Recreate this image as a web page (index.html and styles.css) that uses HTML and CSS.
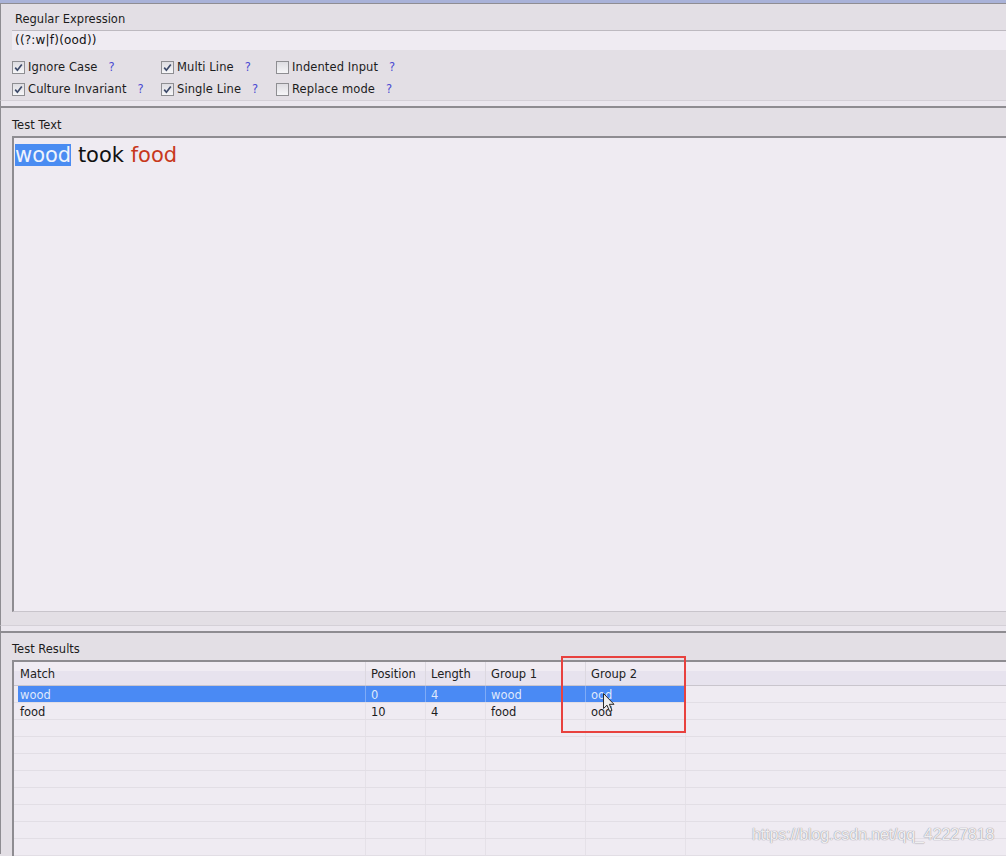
FILE: index.html
```html
<!DOCTYPE html>
<html>
<head>
<meta charset="utf-8">
<link rel="stylesheet" href="styles.css">
</head>
<body>
<div class="topbar"></div>
<section class="panel panel-regex">
  <div class="label label-regex">Regular Expression</div>
  <div class="regex-input">((?:w|f)(ood))</div>
  <div class="options">
    <div class="opt"><span class="cb on"><svg viewBox="0 0 11 11" width="11" height="11"><path d="M2.2 5.6 L4.4 8.2 L8.8 2.4" fill="none" stroke="#3d4a6a" stroke-width="1.7"/></svg></span><span class="txt">Ignore Case</span><span class="q">?</span></div>
    <div class="opt"><span class="cb on"><svg viewBox="0 0 11 11" width="11" height="11"><path d="M2.2 5.6 L4.4 8.2 L8.8 2.4" fill="none" stroke="#3d4a6a" stroke-width="1.7"/></svg></span><span class="txt">Multi Line</span><span class="q">?</span></div>
    <div class="opt"><span class="cb"></span><span class="txt">Indented Input</span><span class="q">?</span></div>
    <div class="opt"><span class="cb on"><svg viewBox="0 0 11 11" width="11" height="11"><path d="M2.2 5.6 L4.4 8.2 L8.8 2.4" fill="none" stroke="#3d4a6a" stroke-width="1.7"/></svg></span><span class="txt">Culture Invariant</span><span class="q">?</span></div>
    <div class="opt"><span class="cb on"><svg viewBox="0 0 11 11" width="11" height="11"><path d="M2.2 5.6 L4.4 8.2 L8.8 2.4" fill="none" stroke="#3d4a6a" stroke-width="1.7"/></svg></span><span class="txt">Single Line</span><span class="q">?</span></div>
    <div class="opt"><span class="cb"></span><span class="txt">Replace mode</span><span class="q">?</span></div>
  </div>
</section>
<div class="splitter"></div>
<section class="panel panel-test">
  <div class="label">Test Text</div>
  <div class="textbox"><span class="hl">wood</span> took <span class="red">food</span></div>
  <div class="gap"></div>
</section>
<div class="splitter"></div>
<section class="panel panel-results">
  <div class="label label-results">Test Results</div>
  <div class="grid">
    <div class="row head">
      <div class="sp"></div><div class="c c1">Match</div><div class="c">Position</div><div class="c">Length</div><div class="c">Group 1</div><div class="c">Group 2</div><div class="c rest"></div>
    </div>
    <div class="row sel">
      <div class="sp"></div><div class="c c1">wood</div><div class="c">0</div><div class="c">4</div><div class="c">wood</div><div class="c">ood</div><div class="c rest"></div>
    </div>
    <div class="row">
      <div class="sp"></div><div class="c c1">food</div><div class="c">10</div><div class="c">4</div><div class="c">food</div><div class="c">ood</div><div class="c rest"></div>
    </div>
    <div class="row"><div class="sp"></div><div class="c c1"></div><div class="c"></div><div class="c"></div><div class="c"></div><div class="c"></div><div class="c rest"></div></div>
    <div class="row"><div class="sp"></div><div class="c c1"></div><div class="c"></div><div class="c"></div><div class="c"></div><div class="c"></div><div class="c rest"></div></div>
    <div class="row"><div class="sp"></div><div class="c c1"></div><div class="c"></div><div class="c"></div><div class="c"></div><div class="c"></div><div class="c rest"></div></div>
    <div class="row"><div class="sp"></div><div class="c c1"></div><div class="c"></div><div class="c"></div><div class="c"></div><div class="c"></div><div class="c rest"></div></div>
    <div class="row"><div class="sp"></div><div class="c c1"></div><div class="c"></div><div class="c"></div><div class="c"></div><div class="c"></div><div class="c rest"></div></div>
    <div class="row"><div class="sp"></div><div class="c c1"></div><div class="c"></div><div class="c"></div><div class="c"></div><div class="c"></div><div class="c rest"></div></div>
    <div class="row"><div class="sp"></div><div class="c c1"></div><div class="c"></div><div class="c"></div><div class="c"></div><div class="c"></div><div class="c rest"></div></div>
    <div class="row"><div class="sp"></div><div class="c c1"></div><div class="c"></div><div class="c"></div><div class="c"></div><div class="c"></div><div class="c rest"></div></div>
  </div>
</section>
<div class="annot"></div>
<svg class="cursor" width="13" height="20" viewBox="0 0 13 20"><path d="M0.5 0.5 L0.5 15.5 L4 12.2 L6.6 18.4 L9 17.4 L6.4 11.3 L11 11.3 Z" fill="#eeeeee" stroke="#2a2a2a" stroke-width="1"/></svg>
<div class="watermark">https://blog.csdn.net/qq_42227818</div>
</body>
</html>
```
FILE: styles.css
```css
* { box-sizing: border-box; }
html, body { margin: 0; padding: 0; }
body {
  width: 1006px;
  height: 856px;
  overflow: hidden;
  position: relative;
  background: #e3dfe5;
  font-family: "DejaVu Sans", Verdana, sans-serif;
  font-size: 11.5px;
  color: #1c1c1c;
}
.topbar {
  height: 4px;
  border-top: 3px solid #a9b2d8;
  border-bottom: 1px solid #8f8d93;
}
.panel {
  border-left: 1px solid #8e8c91;
  background: #e3dfe5;
  padding-left: 11px;
}
.panel-regex {
  height: 96px;
}
.label {
  line-height: 14px;
  padding-top: 10px;
  height: 28px;
}
.label-regex {
  padding-top: 8px;
  padding-left: 3px;
  height: 26px;
}
.regex-input {
  height: 20px;
  border-top: 1px solid #bdb9c0;
  background: #efebf2;
  padding-left: 3px;
  line-height: 19px;
  font-size: 12px;
  letter-spacing: 0.2px;
  color: #111;
}
.options {
  margin-top: 6px;
  display: grid;
  grid-template-columns: 149px 115px auto;
  grid-auto-rows: 22px;
}
.opt {
  display: flex;
  align-items: center;
}
.cb {
  width: 13px;
  height: 13px;
  border: 1px solid #8e8e92;
  background: linear-gradient(#dedde2, #f6f6f8);
  display: inline-flex;
  align-items: center;
  justify-content: center;
  flex: none;
}
.cb svg { display: block; }
.txt { margin-left: 3px; letter-spacing: 0.1px; }
.q {
  margin-left: 11px;
  color: #4a4ad2;
}
.splitter {
  height: 6px;
  border-top: 1px solid #d4d0d7;
  background: #ebe7ee;
  border-left: 1px solid #8e8c91;
}
.panel-test {
  border-top: 2px solid #8e8c91;
}
.textbox {
  height: 476px;
  border-top: 2px solid #8e8c91;
  border-left: 2px solid #8e8c91;
  border-bottom: 1px solid #c8c4cb;
  background: #efebf2;
  padding: 6px 0 0 1px;
  font-size: 21px;
  line-height: 22px;
  color: #111;
}
.hl {
  display: inline-block;
  background: #4a8cf2;
  color: #eef3fc;
  line-height: 22px;
}
.red { color: #c8381c; }
.gap { height: 13px; }
.panel-results {
  border-top: 2px solid #8e8c91;
  height: 223px;
}
.label-results {
  padding-top: 9px;
  height: 27px;
}
.grid {
  border-top: 2px solid #8e8c91;
  border-left: 2px solid #8e8c91;
  background: #efebf2;
  height: 200px;
  overflow: hidden;
}
.row {
  display: grid;
  grid-template-columns: 4px 347px 60px 60px 100px 100px 1fr;
  height: 17px;
  border-bottom: 1px solid #e2dee5;
  line-height: 16px;
}
.row .c { padding-top: 1px; }
.row.head {
  height: 24px;
  border-bottom: 1px solid #c9c5cd;
  background: linear-gradient(#f0ecf3 0, #f0ecf3 9px, #e7e3ee 9px, #e7e3ee 100%);
  line-height: 22px;
  color: #222;
}
.row.head .c { padding-top: 1px; }
.c {
  border-left: 1px solid #e5e1e8;
  padding-left: 5px;
  white-space: nowrap;
  overflow: hidden;
}
.c1 {
  border-left: none;
  padding-left: 2px;
}
.head .c { border-left-color: #dcd8e0; }
.head .c1 { border-left: none; }
.sel .c {
  background: #4a8af4;
  color: #dfe8fb;
  border-left-color: #7fabf6;
}
.sel .c1 { border-left: none; }
.sel .rest { background: transparent; }
.annot {
  position: absolute;
  left: 561px;
  top: 656px;
  width: 125px;
  height: 77px;
  border: 2px solid #e8413e;
}
.cursor {
  position: absolute;
  left: 603px;
  top: 693px;
}
.watermark {
  position: absolute;
  left: 752px;
  top: 826px;
  font-family: "Liberation Sans", Arial, sans-serif;
  font-size: 16px;
  color: rgba(255,255,255,0.85);
  text-shadow: 0 0 1px #9a97a0, 0 0 1px #9a97a0;
  letter-spacing: -0.1px;
}
```
